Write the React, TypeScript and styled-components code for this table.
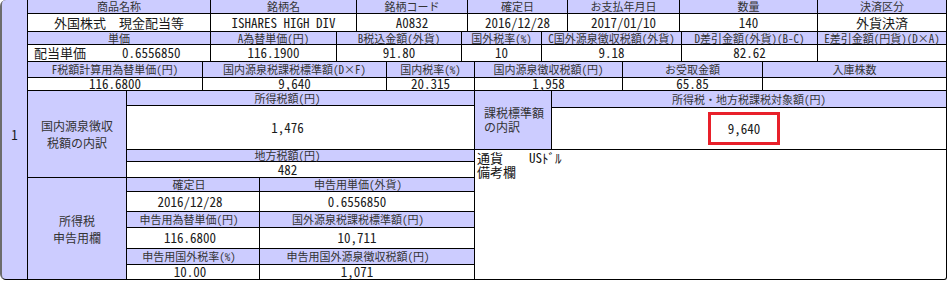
import React from "react";
import { styled, createGlobalStyle } from "styled-components";

const FONT = `"Noto Sans Mono CJK JP", "Noto Sans CJK JP", "Liberation Sans", sans-serif`;

const GlobalStyle = createGlobalStyle`
  body {
    margin: 0;
    background: #ffffff;
    font-family: ${FONT};
    color: #1a1a1a;
  }
`;

const App = () => {
  return (
    <>
      <GlobalStyle />
      <Frame>
        <IndexCell>1</IndexCell>
        <Main>
          <Pair $cols="182px 145px 110px 99px 111px 137px 1fr" $rows="13px 17px">
            <HeadCell>商品名称</HeadCell>
            <HeadCell>銘柄名</HeadCell>
            <HeadCell>銘柄コード</HeadCell>
            <HeadCell>確定日</HeadCell>
            <HeadCell>お支払年月日</HeadCell>
            <HeadCell>数量</HeadCell>
            <HeadCell>決済区分</HeadCell>
            <ValueCell>外国株式　現金配当等</ValueCell>
            <ValueCell>ISHARES HIGH DIV</ValueCell>
            <ValueCell>A0832</ValueCell>
            <ValueCell>2016/12/28</ValueCell>
            <ValueCell>2017/01/10</ValueCell>
            <ValueCell>140</ValueCell>
            <ValueCell>外貨決済</ValueCell>
          </Pair>
          <Pair $cols="182px 125px 124px 79px 139px 135px 1fr" $rows="12px 16px">
            <HeadCell>単価</HeadCell>
            <HeadCell>A為替単価(円)</HeadCell>
            <HeadCell>B税込金額(外貨)</HeadCell>
            <HeadCell>国外税率(%)</HeadCell>
            <HeadCell>C国外源泉徴収税額(外貨)</HeadCell>
            <HeadCell>D差引金額(外貨)(B-C)</HeadCell>
            <HeadCell>E差引金額(円貨)(D×A)</HeadCell>
            <PriceCell>
              <span>配当単価</span>
              <span>0.6556850</span>
            </PriceCell>
            <ValueCell>116.1900</ValueCell>
            <ValueCell>91.80</ValueCell>
            <ValueCell>10</ValueCell>
            <ValueCell>9.18</ValueCell>
            <ValueCell>82.62</ValueCell>
            <ValueCell />
          </Pair>
          <Pair $cols="174px 183px 87px 147px 139px 1fr" $rows="15px 12px">
            <HeadCell>F税額計算用為替単価(円)</HeadCell>
            <HeadCell>国内源泉税課税標準額(D×F)</HeadCell>
            <HeadCell>国内税率(%)</HeadCell>
            <HeadCell>国内源泉徴収税額(円)</HeadCell>
            <HeadCell>お受取金額</HeadCell>
            <HeadCell>入庫株数</HeadCell>
            <ValueCell>116.6800</ValueCell>
            <ValueCell>9,640</ValueCell>
            <ValueCell>20.315</ValueCell>
            <ValueCell>1,958</ValueCell>
            <ValueCell>65.85</ValueCell>
            <ValueCell />
          </Pair>
          <Lower>
            <Column>
              <Block $cols="98px 1fr" $rows="14px 43px 11px 15px">
                <LabelCell $span={4}>
                  国内源泉徴収
                  <br />
                  税額の内訳
                </LabelCell>
                <HeadCell $shift={26}>所得税額(円)</HeadCell>
                <ValueCell $shift={26}>1,476</ValueCell>
                <HeadCell $shift={26}>地方税額(円)</HeadCell>
                <ValueCell $shift={26}>482</ValueCell>
              </Block>
              <Block $cols="98px 132px 1fr" $rows="13px 19px 15px 20px 15px 14px">
                <LabelCell $span={6}>
                  所得税
                  <br />
                  申告用欄
                </LabelCell>
                <HeadCell $shift={8}>確定日</HeadCell>
                <HeadCell $shift={18}>申告用単価(外貨)</HeadCell>
                <ValueCell $shift={6}>2016/12/28</ValueCell>
                <ValueCell $shift={20}>0.6556850</ValueCell>
                <HeadCell $shift={8}>申告用為替単価(円)</HeadCell>
                <HeadCell $shift={18}>国外源泉税課税標準額(円)</HeadCell>
                <ValueCell $shift={6}>116.6800</ValueCell>
                <ValueCell $shift={20}>10,711</ValueCell>
                <HeadCell $shift={8}>申告用国外税率(%)</HeadCell>
                <HeadCell $shift={18}>申告用国外源泉徴収税額(円)</HeadCell>
                <ValueCell $shift={6}>10.00</ValueCell>
                <ValueCell $shift={20}>1,071</ValueCell>
              </Block>
            </Column>
            <Column>
              <Block $cols="76px 1fr" $rows="16px 41px">
                <BaseLabelCell>
                  課税標準額
                  <br />
                  の内訳
                </BaseLabelCell>
                <HeadCell>所得税・地方税課税対象額(円)</HeadCell>
                <ValueCell $shift={10}>
                  <Highlight>9,640</Highlight>
                </ValueCell>
              </Block>
              <NoteCell>
                <div>通貨　　USﾄﾞﾙ</div>
                <div>備考欄</div>
              </NoteCell>
            </Column>
          </Lower>
        </Main>
      </Frame>
    </>
  );
};

export default App;

const Frame = styled.div`
  display: flex;
  gap: 1px;
  width: 947px;
  height: 280px;
  box-sizing: border-box;
  background: #000000;
  border: 1px solid #000000;
  border-top: none;
  border-left: 2px solid #6c6c6c;
  border-radius: 6px 0 3px 6px;
`;

const IndexCell = styled.div`
  width: 25px;
  flex: none;
  display: flex;
  align-items: center;
  justify-content: center;
  background: #ccccff;
  border-radius: 4px 0 0 4px;
  font-size: 13px;
  padding-bottom: 10px;
  box-sizing: border-box;
`;

const Main = styled.div`
  flex: 1;
  display: flex;
  flex-direction: column;
  gap: 1px;
`;

const Pair = styled.div<{ $cols: string; $rows: string }>`
  display: grid;
  grid-template-columns: ${(p) => p.$cols};
  grid-template-rows: ${(p) => p.$rows};
  gap: 1px;
`;

const Lower = styled.div`
  flex: 1;
  display: grid;
  grid-template-columns: 446px 1fr;
  gap: 1px;
`;

const Column = styled.div`
  display: flex;
  flex-direction: column;
  gap: 1px;
`;

const Block = styled.div<{ $cols: string; $rows: string }>`
  display: grid;
  grid-template-columns: ${(p) => p.$cols};
  grid-template-rows: ${(p) => p.$rows};
  gap: 1px;
`;

const HeadCell = styled.div<{ $shift?: number }>`
  display: flex;
  align-items: center;
  justify-content: center;
  padding-right: ${(p) => p.$shift ?? 0}px;
  background: #ccccff;
  color: #333333;
  font-size: 11px;
  line-height: 11px;
  white-space: nowrap;
`;

const ValueCell = styled.div<{ $shift?: number }>`
  display: flex;
  align-items: center;
  justify-content: center;
  padding-right: ${(p) => p.$shift ?? 0}px;
  background: #ffffff;
  color: #1a1a1a;
  font-size: 13px;
  line-height: 12px;
  white-space: nowrap;
`;

const PriceCell = styled.div`
  display: flex;
  align-items: center;
  gap: 36px;
  padding-left: 6px;
  background: #ffffff;
  font-size: 13px;
  line-height: 12px;
  white-space: nowrap;
`;

const LabelCell = styled.div<{ $span: number }>`
  grid-row: 1 / ${(p) => p.$span + 1};
  display: flex;
  align-items: center;
  justify-content: center;
  text-align: center;
  background: #ccccff;
  color: #333333;
  font-size: 12px;
  line-height: 17px;
`;

const BaseLabelCell = styled.div`
  grid-row: 1 / 3;
  display: flex;
  align-items: center;
  padding-left: 9px;
  background: #ccccff;
  color: #333333;
  font-size: 12px;
  line-height: 14px;
`;

const Highlight = styled.span`
  display: inline-block;
  padding: 8px 17px 7px;
  border: 3px solid #e8202a;
`;

const NoteCell = styled.div`
  flex: 1;
  background: #ffffff;
  border-bottom-right-radius: 2px;
  padding: 1px 2px;
  font-size: 13px;
  line-height: 13.5px;
  color: #111111;
`;
